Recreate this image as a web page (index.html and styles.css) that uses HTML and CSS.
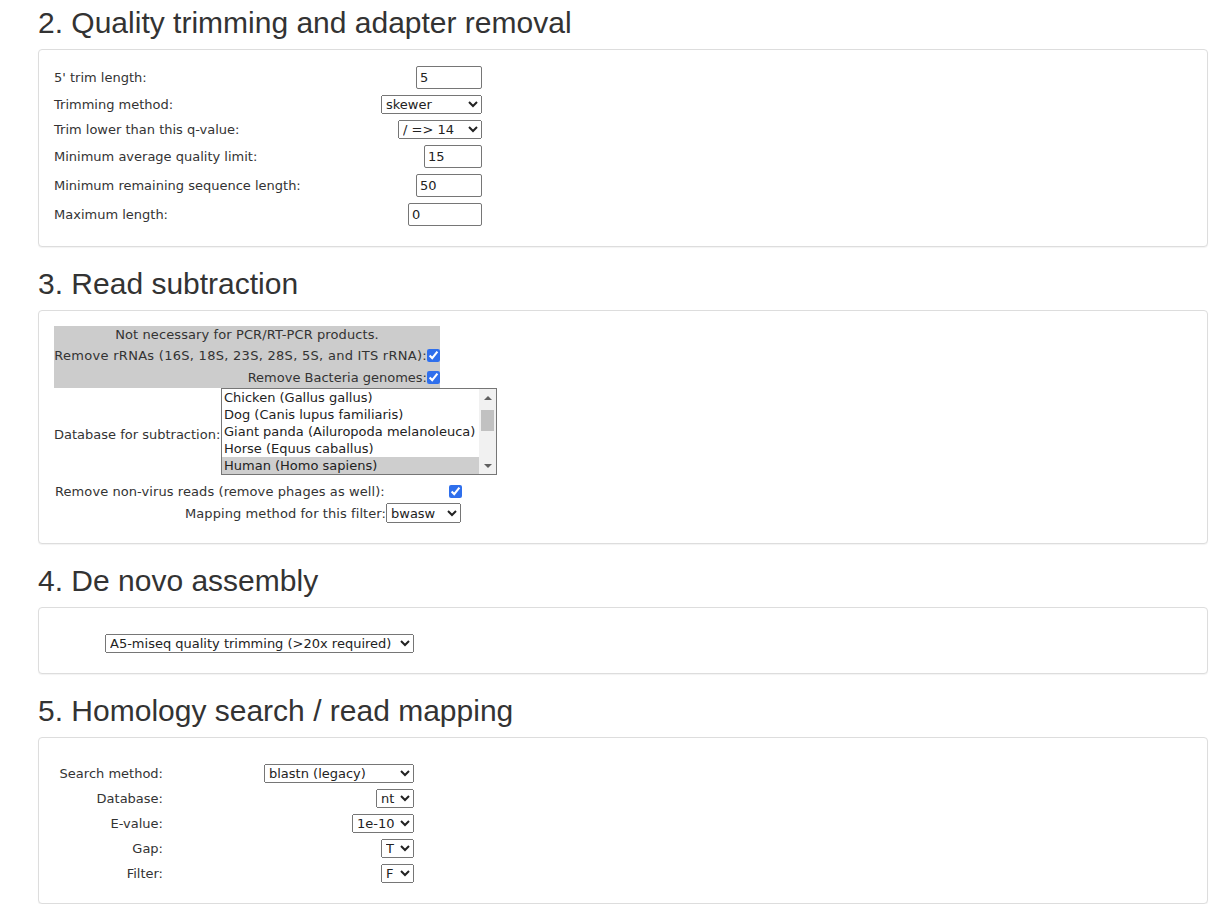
FILE: index.html
```html
<!DOCTYPE html>
<html lang="en">
<head>
<meta charset="utf-8">
<title>Pipeline settings</title>
<link rel="stylesheet" href="styles.css">
</head>
<body>
<div class="page">
  <h2 class="first">2. Quality trimming and adapter removal</h2>
  <div class="panel">
    <div class="panel-body p-trim">
      <div class="form-grid">
        <label>5' trim length:</label>
        <input type="text" class="ctl w66" value="5">
        <label>Trimming method:</label>
        <select class="ctl w101"><option>skewer</option></select>
        <label>Trim lower than this q-value:</label>
        <select class="ctl w84"><option>/ =&gt; 14</option></select>
        <label>Minimum average quality limit:</label>
        <input type="text" class="ctl w58" value="15">
        <label>Minimum remaining sequence length:</label>
        <input type="text" class="ctl w66" value="50">
        <label>Maximum length:</label>
        <input type="text" class="ctl w74" value="0">
      </div>
    </div>
  </div>

  <h2>3. Read subtraction</h2>
  <div class="panel">
    <div class="panel-body p-sub">
      <div class="grey">
        <div class="note">Not necessary for PCR/RT-PCR products.</div>
        <label class="grow wide">Remove rRNAs (16S, 18S, 23S, 28S, 5S, and ITS rRNA):<input type="checkbox" checked></label>
        <label class="grow">Remove Bacteria genomes:<input type="checkbox" checked></label>
      </div>
      <div class="db-row">
        <span class="db-label">Database for subtraction:</span>
        <div class="listbox">
          <ul class="lb-items">
            <li>Chicken (Gallus gallus)</li>
            <li>Dog (Canis lupus familiaris)</li>
            <li>Giant panda (Ailuropoda melanoleuca)</li>
            <li>Horse (Equus caballus)</li>
            <li class="sel">Human (Homo sapiens)</li>
          </ul>
          <div class="lb-scroll">
            <span class="arr up"></span>
            <span class="thumb"></span>
            <span class="arr down"></span>
          </div>
        </div>
      </div>
      <div class="filter-grid">
        <label>Remove non-virus reads (remove phages as well):</label>
        <input type="checkbox" class="ctl" checked>
        <label class="r">Mapping method for this filter:</label>
        <select class="ctl w75 mr1"><option>bwasw</option></select>
      </div>
    </div>
  </div>

  <h2>4. De novo assembly</h2>
  <div class="panel">
    <div class="panel-body p-asm">
      <select class="w309"><option>A5-miseq quality trimming (&gt;20x required)</option></select>
    </div>
  </div>

  <h2>5. Homology search / read mapping</h2>
  <div class="panel">
    <div class="panel-body p-hom">
      <div class="hom-grid">
        <label>Search method:</label>
        <select class="ctl w150"><option>blastn (legacy)</option></select>
        <label>Database:</label>
        <select class="ctl w38"><option>nt</option></select>
        <label>E-value:</label>
        <select class="ctl w62"><option>1e-10</option></select>
        <label>Gap:</label>
        <select class="ctl w33"><option>T</option></select>
        <label>Filter:</label>
        <select class="ctl w33"><option>F</option></select>
      </div>
    </div>
  </div>
</div>
</body>
</html>
```

FILE: styles.css
```css
* { box-sizing: border-box; }
html, body { margin: 0; background: #fff; }
body {
  font-family: "DejaVu Sans", Verdana, sans-serif;
  font-size: 13px;
  color: #333;
}
.page { padding-left: 38px; width: 1208px; }

h2 {
  font-family: "Liberation Sans", Arial, Helvetica, sans-serif;
  font-size: 30px;
  font-weight: 400;
  line-height: 33px;
  color: #333;
  margin: 20px 0 10px;
}
h2.first { margin-top: 6px; }

.panel {
  border: 1px solid #ddd;
  border-radius: 4px;
  background: #fff;
  box-shadow: 0 1px 1px rgba(0,0,0,.05);
}
.panel-body { padding: 15px 15px 20px; }
.p-trim { padding-top: 16px; }
.p-sub { padding-top: 15px; }
.p-asm { padding: 26px 15px 20px 66px; }
.p-hom { padding: 26px 15px 20px 20px; }

label { white-space: nowrap; }

input[type="text"] {
  font: inherit;
  color: #222;
  height: 23px;
  border: 1px solid #767676;
  border-radius: 2px;
  padding: 1px 3px;
  margin: 0;
  background: #fff;
}
select {
  font: inherit;
  color: #222;
  height: 19px;
  margin: 0;
}
input[type="checkbox"] {
  width: 13px;
  height: 13px;
  margin: 0;
  accent-color: #2f6fec;
}

.w33 { width: 33px; }
.w38 { width: 38px; }
.w58 { width: 58px; }
.w62 { width: 62px; }
.w66 { width: 66px; }
.w74 { width: 74px; }
.w75 { width: 75px; height: 20px; }
.w84 { width: 84px; }
.w101 { width: 101px; }
.w150 { width: 150px; }
.w309 { width: 309px; display: block; }
.mr1 { margin-right: 1px; }

.ctl { justify-self: end; }

/* section 2 */
.form-grid {
  display: grid;
  grid-template-columns: 327px 101px;
  row-gap: 6px;
  align-items: center;
}

/* section 3 */
.grey {
  width: 386px;
  background: #ccc;
}
.note {
  height: 18px;
  line-height: 18px;
  text-align: center;
  white-space: nowrap;
  letter-spacing: 0.1px;
}
.grow {
  height: 22px;
  display: flex;
  justify-content: flex-end;
  align-items: center;
}
.grow.wide { letter-spacing: 0.28px; }
.db-row {
  display: flex;
  align-items: center;
}
.db-label {
  flex: 0 0 167px;
  white-space: nowrap;
  padding-top: 5px;
}
.listbox {
  display: flex;
  width: 276px;
  height: 87px;
  border: 1px solid #767676;
  background: #fff;
}
.lb-items {
  list-style: none;
  margin: 0;
  padding: 0;
  flex: 1;
  min-width: 0;
}
.lb-items li {
  height: 17px;
  line-height: 17px;
  padding-left: 2px;
  white-space: nowrap;
  overflow: hidden;
  color: #222;
}
.lb-items li.sel { background: #cecece; }
.lb-scroll {
  flex: 0 0 17px;
  background: #f1f1f1;
  display: flex;
  flex-direction: column;
  align-items: center;
}
.arr {
  height: 17px;
  width: 17px;
  display: flex;
  align-items: center;
  justify-content: center;
}
.arr::before {
  content: "";
  width: 0;
  height: 0;
  border-left: 4px solid transparent;
  border-right: 4px solid transparent;
}
.arr.up::before { border-bottom: 4px solid #606060; }
.arr.down { margin-top: auto; }
.arr.down::before { border-top: 4px solid #606060; }
.thumb {
  width: 13px;
  height: 21px;
  margin-top: 4px;
  background: #c1c1c1;
}
.filter-grid {
  display: grid;
  grid-template-columns: 331px 76px;
  grid-template-rows: 21px 20px;
  row-gap: 1px;
  align-items: center;
  margin: 6px 0 0 1px;
  letter-spacing: 0.08px;
}
.filter-grid .r { justify-self: end; }

/* section 5 */
.hom-grid {
  display: grid;
  grid-template-columns: 104px 251px;
  grid-auto-rows: 19px;
  row-gap: 6px;
  align-items: center;
}
.hom-grid label { justify-self: end; }
```
